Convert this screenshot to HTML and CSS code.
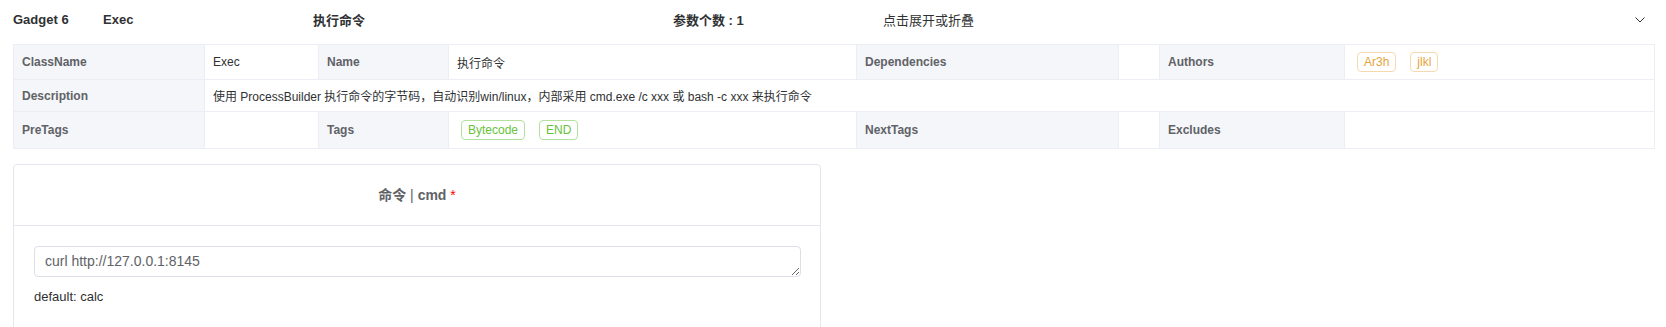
FILE: index.html
```html
<!DOCTYPE html>
<html>
    <head>
        <meta charset="utf-8">
        <link rel="stylesheet" href="styles.css">
    </head>
 <body>
    <div class="gadget">
        <div class="gadget-head">
            <span class="h-idx">Gadget 6</span>
            <span class="h-class">Exec</span>
            <span class="h-name">执行命令</span>
            <span class="h-count">参数个数 : 1</span>
            <span class="h-tip">点击展开或折叠</span>
            <svg class="arrow" width="10" height="6" viewBox="0 0 10 6">
                <polyline points="0.5,0.5 5,5 9.5,0.5" fill="none" stroke="#303133" stroke-width="1"/>
            </svg>
        </div>

        <table class="desc">
            <colgroup>
                <col style="width:191px">
                <col style="width:114px">
                <col style="width:130px">
                <col style="width:408px">
                <col style="width:262px">
                <col style="width:41px">
                <col style="width:185px">
                <col>
            </colgroup>
            <tr class="row-tags">
                <td class="lbl">ClassName</td>
                <td>Exec</td>
                <td class="lbl">Name</td>
                <td>执行命令</td>
                <td class="lbl">Dependencies</td>
                <td></td>
                <td class="lbl">Authors</td>
                <td><span class="tag tag-warn">Ar3h</span><span class="tag tag-warn">jlkl</span></td>
            </tr>
            <tr class="row-plain">
                <td class="lbl">Description</td>
                <td colspan="7">使用 ProcessBuilder 执行命令的字节码，自动识别win/linux，内部采用 cmd.exe /c xxx 或 bash -c xxx 来执行命令</td>
            </tr>
            <tr class="row-tags last">
                <td class="lbl">PreTags</td>
                <td></td>
                <td class="lbl">Tags</td>
                <td><span class="tag tag-ok">Bytecode</span><span class="tag tag-ok">END</span></td>
                <td class="lbl">NextTags</td>
                <td></td>
                <td class="lbl">Excludes</td>
                <td></td>
            </tr>
        </table>

        <div class="param-card">
            <div class="param-title">命令 <span class="sep">|</span> cmd <span class="req">*</span></div>
            <div class="param-body">
                <textarea class="param-input" rows="1">curl http://127.0.0.1:8145</textarea>
                <div class="param-default">default: calc</div>
            </div>
        </div>
    </div>
 </body>
</html>
```

FILE: styles.css
```css
body{
    margin: 0;
    font-family: "Liberation Sans", "Noto Sans CJK SC", sans-serif;
    color: #303133;
    background: #ffffff;
}
.gadget-head{
    display: flex;
    align-items: center;
    height: 39px;
    padding: 0 21px 0 13px;
    font-size: 13px;
}
.h-idx{
    width: 90px;
    font-weight: bold;
}
.h-class{
    width: 210px;
    font-weight: bold;
}
.h-name{
    width: 360px;
    font-weight: bold;
}
.h-count{
    width: 210px;
    font-weight: bold;
}
.h-tip{
    flex: 1;
}
.arrow{
    display: block;
}
.desc{
    margin: 5px 0 0 13px;
    width: 1642px;
    table-layout: fixed;
    border-collapse: collapse;
    font-size: 12px;
}
.desc td{
    border: 1px solid #ebeef5;
    padding: 0 8px;
    color: #303133;
    white-space: nowrap;
}
.desc td.lbl{
    background: #f5f6fa;
    color: #606266;
    font-weight: bold;
}
.row-tags td{
    height: 34px;
}
.row-tags.last td{
    height: 36px;
}
.row-plain td{
    height: 31px;
}
.tag{
    display: inline-block;
    height: 18px;
    line-height: 18px;
    padding: 0 6px;
    margin: 0 10px 0 4px;
    border: 1px solid;
    border-radius: 4px;
    background: #ffffff;
    vertical-align: middle;
}
.tag-ok{
    color: #67c23a;
    border-color: #b3e19d;
}
.tag-warn{
    color: #e6a23c;
    border-color: #f5dab1;
}
.param-card{
    margin: 15px 0 0 13px;
    width: 806px;
    border: 1px solid #e4e7ed;
    border-radius: 4px;
}
.param-title{
    height: 60px;
    line-height: 60px;
    text-align: center;
    border-bottom: 1px solid #e4e7ed;
    font-size: 14px;
    font-weight: bold;
    color: #606266;
}
.sep{
    font-weight: normal;
}
.req{
    color: #f00;
    font-weight: normal;
}
.param-body{
    padding: 20px 20px 30px 20px;
}
.param-input{
    display: block;
    box-sizing: border-box;
    width: 767px;
    height: 31px;
    padding: 5px 10px;
    border: 1px solid #dcdfe6;
    border-radius: 4px;
    font-family: "Liberation Sans", "Noto Sans CJK SC", sans-serif;
    font-size: 14px;
    line-height: 19px;
    color: #606266;
    resize: vertical;
}
.param-default{
    margin-top: 11px;
    font-size: 13px;
    line-height: 18px;
    color: #303133;
}
```
